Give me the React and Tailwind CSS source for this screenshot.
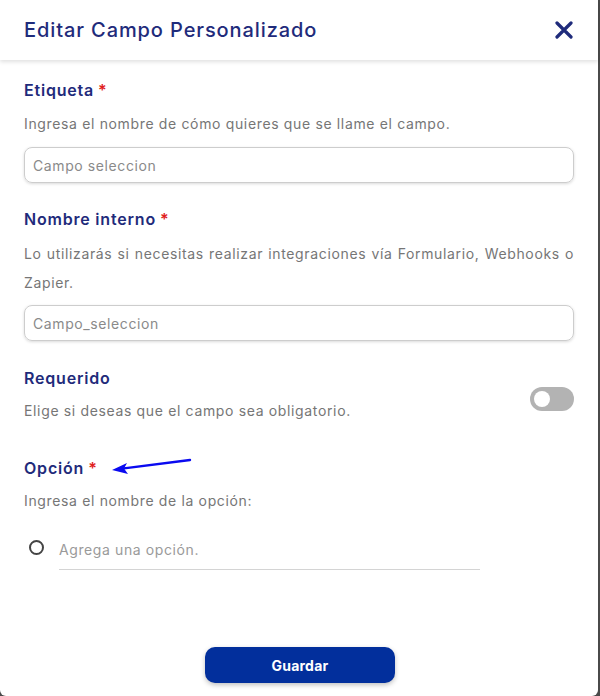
import React from "react";

const F = { fontFamily: "Inter, 'Noto Sans', sans-serif" };

function Label({ children, star }) {
  return (
    <div className="text-[16px] leading-[20px] font-semibold text-[#1f2b7b] tracking-[0.8px]">
      {children}
      {star && <span className="text-[#e0201c] ml-1">*</span>}
    </div>
  );
}

const desc = "text-[14px] leading-[20px] text-[#767676] tracking-[0.65px]";

export default function App() {
  return (
    <div className="w-[600px] h-[696px] bg-[#4a4a4a] overflow-hidden" style={F}>
      <div className="w-[598px] h-[696px] bg-white rounded-b-md flex flex-col">
        <div className="h-[60px] shrink-0 flex items-center justify-between pl-6 pr-[25px] shadow-[0_2px_4px_rgba(0,0,0,0.12)] relative z-10">
          <div className="text-[20px] font-medium text-[#1f2b7b] tracking-[0.9px]">Editar Campo Personalizado</div>
          <svg width="18" height="18" viewBox="0 0 18 18">
            <path d="M2 2 L16 16 M16 2 L2 16" stroke="#1f2b7b" strokeWidth="3.2" strokeLinecap="round" />
          </svg>
        </div>
        <div className="px-6 flex flex-col">
          <div className="mt-[20px]"><Label star>Etiqueta</Label></div>
          <div className={`mt-[14px] ${desc}`}>
            Ingresa el nombre de cómo quieres que se llame el campo.
          </div>
          <div className="mt-[13px] h-[36px] rounded-lg border border-[#cdcdcd] shadow-[0_1px_3px_rgba(0,0,0,0.15)] flex items-center px-2 text-[14px] text-[#8a8a8a] tracking-[0.6px]">
            Campo seleccion
          </div>
          <div className="mt-[26px]"><Label star>Nombre interno</Label></div>
          <div className="mt-[10px] text-[14px] leading-[29px] text-[#767676] text-justify tracking-[0.65px]">
            Lo utilizarás si necesitas realizar integraciones vía Formulario, Webhooks o Zapier.
          </div>
          <div className="mt-[8px] h-[36px] rounded-lg border border-[#cdcdcd] shadow-[0_1px_3px_rgba(0,0,0,0.15)] flex items-center px-2 text-[14px] text-[#8a8a8a] tracking-[0.6px]">
            Campo_seleccion
          </div>
          <div className="mt-[27px] flex items-center justify-between">
            <div className="flex flex-col">
              <Label>Requerido</Label>
              <div className={`mt-[13px] ${desc}`}>
                Elige si deseas que el campo sea obligatorio.
              </div>
            </div>
            <div className="mt-[8px] w-[44px] h-[24px] rounded-full bg-[#b3b3b3] flex items-center pl-[4px]">
              <div className="w-[16px] h-[16px] rounded-full bg-white" />
            </div>
          </div>
          <div className="mt-[37px] relative">
            <Label star>Opción</Label>
            <svg className="absolute left-[86px] top-[-3px]" width="85" height="20" viewBox="0 0 85 20">
              <line x1="12" y1="13.6" x2="80" y2="5" stroke="#0a0af0" strokeWidth="2.4" strokeLinecap="round" />
              <polygon points="2,15 17,8 14,13.5 18,19" fill="#0a0af0" />
            </svg>
          </div>
          <div className={`mt-[13px] ${desc}`}>
            Ingresa el nombre de la opción:
          </div>
          <div className="mt-[24px] flex items-start">
            <div className="ml-[5px] mt-[5px] w-[15px] h-[15px] rounded-full border-2 border-[#444]" />
            <div className="ml-[15px] w-[421px] pt-[5px] pb-[9px] border-b border-[#d4d4d4] text-[14px] leading-[20px] text-[#9a9a9a] tracking-[0.6px]">
              Agrega una opción.
            </div>
          </div>
          <div className="mt-[77px] flex justify-center">
            <button className="ml-[2px] w-[190px] h-[36px] rounded-[10px] bg-[#022f9c] text-white text-[14px] font-bold tracking-[0.2px] shadow-[0_2px_5px_rgba(0,0,0,0.25)]">
              Guardar
            </button>
          </div>
        </div>
      </div>
    </div>
  );
}
